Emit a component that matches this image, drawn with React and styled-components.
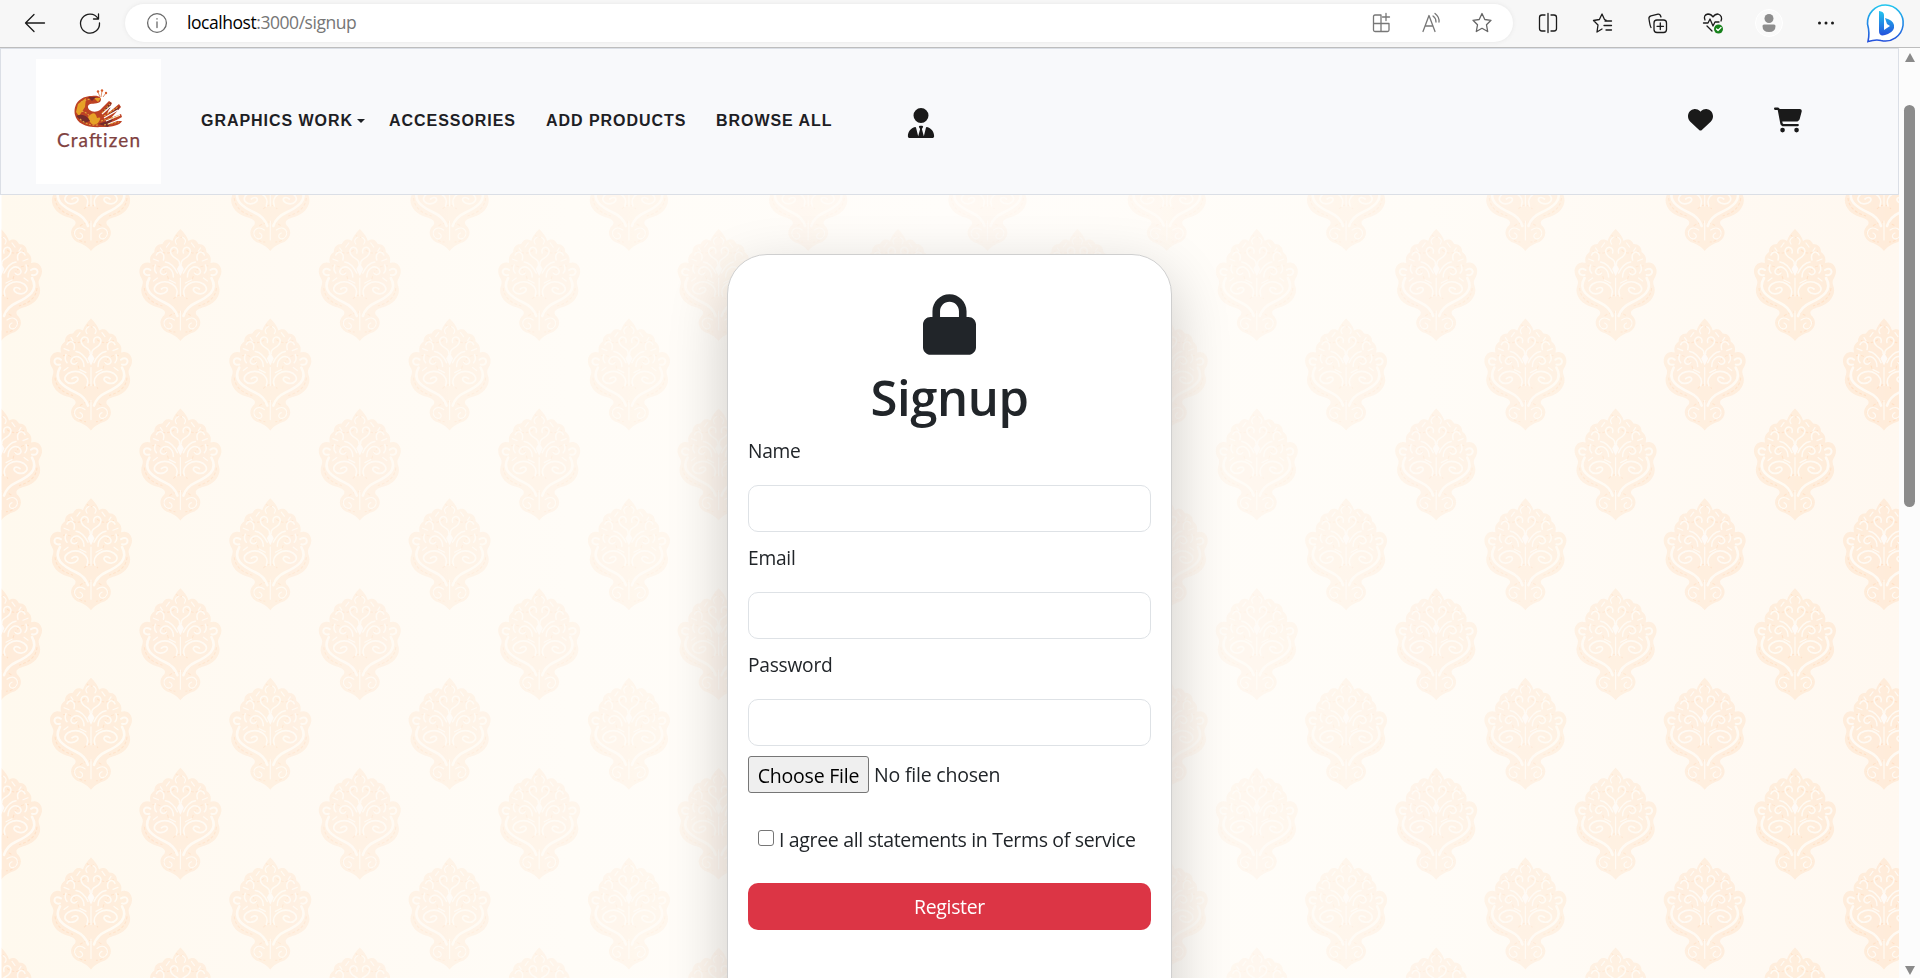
import React from 'react';
import styled, { createGlobalStyle } from 'styled-components';
import { FaHeart, FaCartShopping, FaUserTie, FaLock } from 'react-icons/fa6';

const Global = createGlobalStyle`
  *{box-sizing:border-box;}
  html,body{margin:0;height:978px;overflow:hidden;background:#fff;}
`;
const ui = `'Open Sans','Noto Sans',sans-serif`;

const Screen = styled.div`width:1920px;height:978px;display:flex;flex-direction:column;overflow:hidden;font-family:${ui};color:#212529;`;
const Toolbar = styled.header`height:48px;flex:none;display:flex;align-items:center;background:#f7f7f7;border-bottom:1px solid #bdbdbd;padding:0 0 2px 24px;`;
const ToolIcon = styled.svg`width:24px;height:24px;flex:none;display:block;fill:none;stroke:${p => p.$c || '#1b1b1b'};stroke-width:1.3;stroke-linecap:round;stroke-linejoin:round;margin-left:${p => p.$ml || 0}px;`;
const ProfileIcon = styled.svg`width:28px;height:28px;flex:none;margin-left:30px;`;
const BingIcon = styled.svg`width:40px;height:42px;flex:none;margin-left:27px;margin-top:2px;`;
const Address = styled.div`width:1388px;height:38px;flex:none;margin-left:23px;background:#fff;border-radius:19px;box-shadow:0 0 4px #e6e6e6;display:flex;align-items:center;padding:0 19px 0 20px;`;
const Url = styled.span`flex:1;margin:-2px 0 0 18px;font-size:17.5px;line-height:24px;letter-spacing:-.45px;color:#767676;b{font-weight:400;color:#000;}`;
const View = styled.div`flex:1;display:flex;min-height:0;`;
const Page = styled.main`width:1899px;flex:none;display:flex;flex-direction:column;`;
const Nav = styled.nav`height:147px;flex:none;border:1px solid #dbdfe6;background:#f8f9fb;display:flex;align-items:center;padding-left:35px;`;
const LogoSvg = styled.svg`width:125px;height:125px;flex:none;background:#fff;display:block;`;
const Links = styled.div`display:flex;align-items:center;margin:-2px 0 0 40px;gap:30px;`;
const NavLink = styled.a`font:700 16px/24px 'Liberation Sans',Arial,sans-serif;letter-spacing:.95px;color:#1d2024;display:flex;align-items:center;white-space:nowrap;width:${p => p.$w}px;`;
const Caret = styled.i`border:4.5px solid transparent;border-top-color:#1d2024;border-bottom:0;margin-left:4px;`;
const NavIcon = styled.span`display:flex;color:#1a1a1a;font-size:${p => p.$s}px;margin-left:${p => p.$ml}px;margin-top:${p => p.$mt || 0}px;`;
const Stage = styled.section`flex:1;min-height:0;display:grid;grid-template-columns:minmax(0,1fr);overflow:hidden;background:#fffdf8;`;
const Backdrop = styled.svg`grid-area:1/1;width:1899px;height:783px;display:block;`;
const Card = styled.form`grid-area:1/1;z-index:1;justify-self:center;width:445px;height:840px;margin-top:59px;background:#fff;border:1px solid #cfcfcf;border-radius:40px;box-shadow:0 20px 60px rgba(0,0,0,.2);padding:39px 20px;display:flex;flex-direction:column;`;
const LockWrap = styled.div`height:62px;display:flex;justify-content:center;svg{width:53px;height:61px;margin-right:1px;}`;
const Title = styled.h1`margin:11px 0 9px;text-align:center;font-weight:600;font-size:49px;line-height:60px;letter-spacing:-.4px;`;
const Label = styled.label`font-size:19.2px;line-height:30px;letter-spacing:-.25px;margin-bottom:19px;`;
const Field = styled.input`height:47px;flex:none;width:100%;border:1px solid #dee2e6;border-radius:10px;margin:0 0 11px;background:#fff;`;
const FileRow = styled.div`display:flex;align-items:center;font-size:19.5px;letter-spacing:-.2px;margin-top:-1px;`;
const FileButton = styled.button`width:121px;height:37px;border:1px solid #767676;border-radius:3px;background:#efefef;font:400 19.5px/30px ${ui};letter-spacing:-.22px;color:#000;padding:2px 0 0;margin-right:5px;white-space:nowrap;`;
const Agree = styled.label`display:flex;align-items:center;height:30px;margin:31px 0 0 10px;font-size:19.5px;letter-spacing:-.33px;white-space:nowrap;`;
const Check = styled.i`width:16px;height:16px;flex:none;border:1px solid #767676;border-radius:3px;margin:-2px 5px 0 0;`;
const Register = styled.button`height:47px;flex:none;margin-top:29px;border:0;border-radius:10px;background:#dc3545;color:#fff;font:400 19.4px/30px ${ui};letter-spacing:-.3px;`;
const Track = styled.aside`flex:1;background:#fcfcfc;display:flex;flex-direction:column;align-items:center;padding:5px 0 3px;`;
const Arrow = styled.i`border:5.5px solid transparent;border-${p => (p.$up ? 'bottom' : 'top')}:9px solid #8a8a8a;border-${p => (p.$up ? 'top' : 'bottom')}:0;`;
const Thumb = styled.div`width:11px;height:402px;border-radius:6px;background:#8b8b8b;margin:43px 0 auto;`;

function Damask() {
  const cols = Array.from({ length: 11 }, (_, i) => i);
  const rows = Array.from({ length: 6 }, (_, i) => i);
  return (
    <Backdrop viewBox="0 0 1899 783">
      <defs>
        <linearGradient id="base">
          <stop offset="0" stopColor="#fff9ee" /><stop offset=".15" stopColor="#fffaf3" /><stop offset=".3" stopColor="#fffcf7" /><stop offset=".5" stopColor="#fffdfa" /><stop offset=".75" stopColor="#fffcf7" /><stop offset="1" stopColor="#fff8f0" />
        </linearGradient>
        <linearGradient id="fade" gradientUnits="userSpaceOnUse" x1="0" x2="1899">
          <stop offset="0" stopColor="#fff" /><stop offset=".1" stopColor="#c8c8c8" /><stop offset=".2" stopColor="#8e8e8e" /><stop offset=".33" stopColor="#585858" /><stop offset=".45" stopColor="#363636" /><stop offset=".6" stopColor="#363636" /><stop offset=".7" stopColor="#5c5c5c" /><stop offset=".82" stopColor="#a0a0a0" /><stop offset=".93" stopColor="#e0e0e0" /><stop offset="1" stopColor="#fff" />
        </linearGradient>
        <mask id="m" maskUnits="userSpaceOnUse" x="0" y="0" width="1899" height="783"><rect width="1899" height="783" fill="url(#fade)" /></mask>
        <g id="motif">
          <path fill="#ffecda" d="M0 0C4 4 7 8 8 12C13 9 16 11 18 15C23 15 26 18 26 23C30 26 31 29 30 34C39 31 44 41 39 49C38 51 37 52 38 56C42 65 35 75 24 78C17 80 14 82 16 86C22 91 21 99 14 103C8 105 4 107 0 112C-4 107-8 105-14 103C-21 99-22 91-16 86C-14 82-17 80-24 78C-35 75-42 65-38 56C-37 52-38 51-39 49C-44 41-39 31-30 34C-31 29-30 26-26 23C-26 18-23 15-18 15C-16 11-13 9-8 12C-7 8-4 4 0 0Z" />
          <path fill="none" stroke="#ffe0c6" strokeWidth="1.100" strokeDasharray="3 2" d="M-23 22Q-12 27-5 20M23 22Q12 27 5 20M-28 37Q-16 35-12 50M28 37Q16 35 12 50M-11 87Q0 79 11 87M-36 59Q-35 72-18 77M36 59Q35 72 18 77M-7 70Q0 62 7 70M-17 93Q-14 103-5 103M17 93Q14 103 5 103M-4 6Q0 11 4 6" />
          <g fill="none" stroke="#fffaf3" strokeWidth="1.800" strokeLinecap="round">
            {[1, -1].map(s => (
              <g key={s} transform={`scale(${s} 1)`}>
                <path d="M31 49C38 61 28 68 15 74Q6 78 3 87" strokeWidth="2.600" />
                <path d="M30 41C38 36 39 48 31 46" strokeWidth="2" />
                <path d="M4 67C0 57 13 49 23 55C30 60 24 67 16 64C10 61 14 56 19 60" strokeWidth="1.700" />
                <path d="M1 35C-1 29 10 30 10 22C9 16 1 18 3 24" strokeWidth="1.500" />
                <path d="M7 48C7 40 14 35 19 40C22 44 17 48 14 44M17 31C15 24 21 20 24 26M3 44Q8 34 15 33M24 44Q27 41 25 36" strokeWidth="1.500" />
                <path d="M6 91C14 85 20 94 14 99C9 102 6 96 11 94M2 8Q7 11 4 15M11 14L14 18M20 19L18 22M27 30L22 32M5 54L11 51M23 49L27 52" strokeWidth="1.200" />
              </g>
            ))}
            <path d="M0 67V49M0 82V101" strokeWidth="1.200" />
          </g>
          <path fill="#fffaf6" d="M0 34L3.500 40L0 47L-3.500 40Z" />
        </g>
      </defs>
      <rect width="1899" height="783" fill="url(#base)" />
      <g mask="url(#m)">
        {rows.map(r => cols.map(c => (
          <g key={`${r}-${c}`}>
            <use href="#motif" x={1 + c * 179.4} y={34 + (r - 1) * 179.6} />
            <use href="#motif" x={91 + c * 179.3} y={-56 + r * 179.6} />
          </g>
        )))}
      </g>
      <rect width="1.5" height="783" fill="#fff" />
    </Backdrop>
  );
}

function Logo() {
  return (
    <LogoSvg viewBox="0 0 125 125">
      <path fill="#bd4224" d="M64 43C67 39 63 36 56 37C43 37 37 46 39 56C41 65 51 69 66 68C77 68 84 66 86 62L79 62L86 58L85 55L75 59L85 48L83 45L71 55L76 44L73 42L64 51C58 55 51 51 52 47C54 43 60 46 64 43Z" />
      <path fill="#e7a126" d="M42 45L50 39L49 48L43 57L40 53ZM52 58Q59 50 61 59Q67 57 62 64Q57 68 54 63ZM58 39L65 39L62 43Z" />
      <path fill="#752b2b" d="M52 38L60 38L56 42ZM40 57Q49 53 54 62L48 64ZM67 52L75 43L74 50ZM72 56L84 47L82 51ZM62 65L77 60L72 68Z" />
      <path fill="none" stroke="#fff" strokeWidth="1.200" d="M66 55L75 47M68 59L82 51M70 62L84 56M72 65L85 60" />
      <path fill="none" stroke="#e2a33a" strokeWidth="1.100" strokeDasharray="2 1.5" d="M42 52Q52 51 58 64M44 60Q51 67 62 66M65 62L83 57M68 57L82 48M66 54L74 45M45 43L54 40M68 66L83 63" />
      <path fill="none" stroke="#d87545" strokeWidth=".8" d="M64 38L62 33M65 38L66 32M67 38L70 34" />
      <g fill="#d85d2c"><circle cx="62" cy="32.500" r="1.200" /><circle cx="66" cy="31.500" r="1.200" /><circle cx="70" cy="34" r="1.200" /></g>
      <text x="62.500" y="88" textAnchor="middle" textLength="83" lengthAdjust="spacing" fontFamily="Lato,sans-serif" fontSize="19" fill="#80413f" stroke="#80413f" strokeWidth=".25">Craftizen</text>
    </LogoSvg>
  );
}

export default function App() {
  return (
    <Screen>
      <Global />
      <Toolbar>
        <ToolIcon viewBox="0 0 24 24" $ml={-1}><path d="M21.500 12H2.500M11 3.500L2.500 12L11 20.500" /></ToolIcon>
        <ToolIcon viewBox="0 0 24 24" $ml={31}><path d="M20 7.500A9.500 9.500 0 1 0 21.500 12M20.500 3V8H15.500" /></ToolIcon>
        <Address>
          <ToolIcon viewBox="0 0 24 24" $c="#6a6a6a"><circle cx="12" cy="12" r="9.400" /><path d="M12 11V16.500M12 7.700V8" /></ToolIcon>
          <Url><b>localhost</b>:3000/signup</Url>
          <ToolIcon viewBox="0 0 24 24" $c="#777"><path d="M11 4H5Q3.500 4 3.500 5.500V19Q3.500 20.500 5 20.500H17.500Q19 20.500 19 19V12.500H3.500M11 4V20.500M16 2.500V9.500M12.500 6H19.500" /></ToolIcon>
          <ToolIcon viewBox="0 0 24 24" $c="#777" $ml={26}><path d="M3 20.500L9 4.500L15 20.500M5.200 15H13M13 5Q16 7 16 11M15 2.500Q19.500 6 19 11" /></ToolIcon>
          <ToolIcon viewBox="0 0 24 24" $c="#666" $ml={26}><path d="M12 2.500L14.800 8.500L21 9.300L16.500 13.800L17.700 20.500L12 17.300L6.300 20.500L7.500 13.800L3 9.300L9.200 8.500Z" /></ToolIcon>
        </Address>
        <ToolIcon viewBox="0 0 24 24" $ml={23}><path d="M9 4H6Q3.500 4 3.500 6.500V17.500Q3.500 20 6 20H9M12 2.500V21.500M15 4H18Q20.500 4 20.500 6.500V17.500Q20.500 20 18 20H15" /></ToolIcon>
        <ToolIcon viewBox="0 0 24 24" $ml={31}><path d="M15 9L13.500 8.500L11 3L8.400 8.500L2.500 9.500L7 14L6 21L11 18M14 10H20.500M13 14.500H20.500M15 19H20.500" /></ToolIcon>
        <ToolIcon viewBox="0 0 24 24" $ml={31}><rect x="8" y="9" width="12.500" height="12.500" rx="3" /><path d="M14.300 12V18.500M11 15.300H17.500M5 16.500Q4 15 3 8Q2.500 5.500 5 4.800L12 3.200Q14 2.800 15 6" /></ToolIcon>
        <ToolIcon viewBox="0 0 24 24" $ml={31}><path d="M4 9Q2 4 7 3Q10 3 12 6Q14 3 17 3Q22 5 20 10M2.500 12H7L9 8L12 15L14 11H18M6 15L11 20" /><circle cx="17.500" cy="18" r="4.500" fill="#16811b" stroke="none" /><path d="M15.500 18L17 19.500L20 16.500" stroke="#fff" /></ToolIcon>
        <ProfileIcon viewBox="0 0 28 28"><circle cx="14" cy="14" r="13.500" fill="#fafafa" stroke="#fff" /><circle cx="14" cy="9.500" r="4.500" fill="#8d8d8d" /><path fill="#8d8d8d" d="M9 15.500H19Q20.500 15.500 20.500 17Q20.500 23 14 23Q7.500 23 7.500 17Q7.500 15.500 9 15.500" /></ProfileIcon>
        <ToolIcon viewBox="0 0 24 24" $ml={31} $c="none"><g fill="#1b1b1b"><circle cx="5.500" cy="12" r="1.500" /><circle cx="12" cy="12" r="1.500" /><circle cx="18.500" cy="12" r="1.500" /></g></ToolIcon>
        <BingIcon viewBox="0 0 40 42">
          <defs><linearGradient id="bg" x2="0" y2="1"><stop stopColor="#22c6ee" /><stop offset="1" stopColor="#2450dc" /></linearGradient></defs>
          <path fill="#fff" stroke="url(#bg)" strokeWidth="1.600" d="M20.500 2A18 18 0 1 1 16 37.500Q11 36 3 38.500Q5 30 2.500 21A18 18 0 0 1 20.500 2Z" />
          <path fill="url(#bg)" d="M14 8Q19 8.500 19 12V27L25 23L22 21L20 15Q28 17 29 22Q30 28 23 31Q14 35 14 28Z" />
        </BingIcon>
      </Toolbar>
      <View>
        <Page>
          <Nav>
            <Logo />
            <Links>
              <NavLink $w={158}>GRAPHICS WORK<Caret /></NavLink>
              <NavLink $w={127}>ACCESSORIES</NavLink>
              <NavLink $w={140}>ADD PRODUCTS</NavLink>
              <NavLink $w={116}>BROWSE ALL</NavLink>
            </Links>
            <NavIcon $s={30} $ml={74} $mt={3}><FaUserTie /></NavIcon>
            <NavIcon $s={25} $ml={752} $mt={-4}><FaHeart /></NavIcon>
            <NavIcon $s={28} $ml={61} $mt={-3}><FaCartShopping /></NavIcon>
          </Nav>
          <Stage>
            <Damask />
            <Card>
              <LockWrap><FaLock /></LockWrap>
              <Title>Signup</Title>
              <Label>Name</Label><Field />
              <Label>Email</Label><Field />
              <Label>Password</Label><Field />
              <FileRow><FileButton type="button">Choose File</FileButton>No file chosen</FileRow>
              <Agree><Check />I agree all statements in Terms of service</Agree>
              <Register type="button">Register</Register>
            </Card>
          </Stage>
        </Page>
        <Track><Arrow $up /><Thumb /><Arrow /></Track>
      </View>
    </Screen>
  );
}
